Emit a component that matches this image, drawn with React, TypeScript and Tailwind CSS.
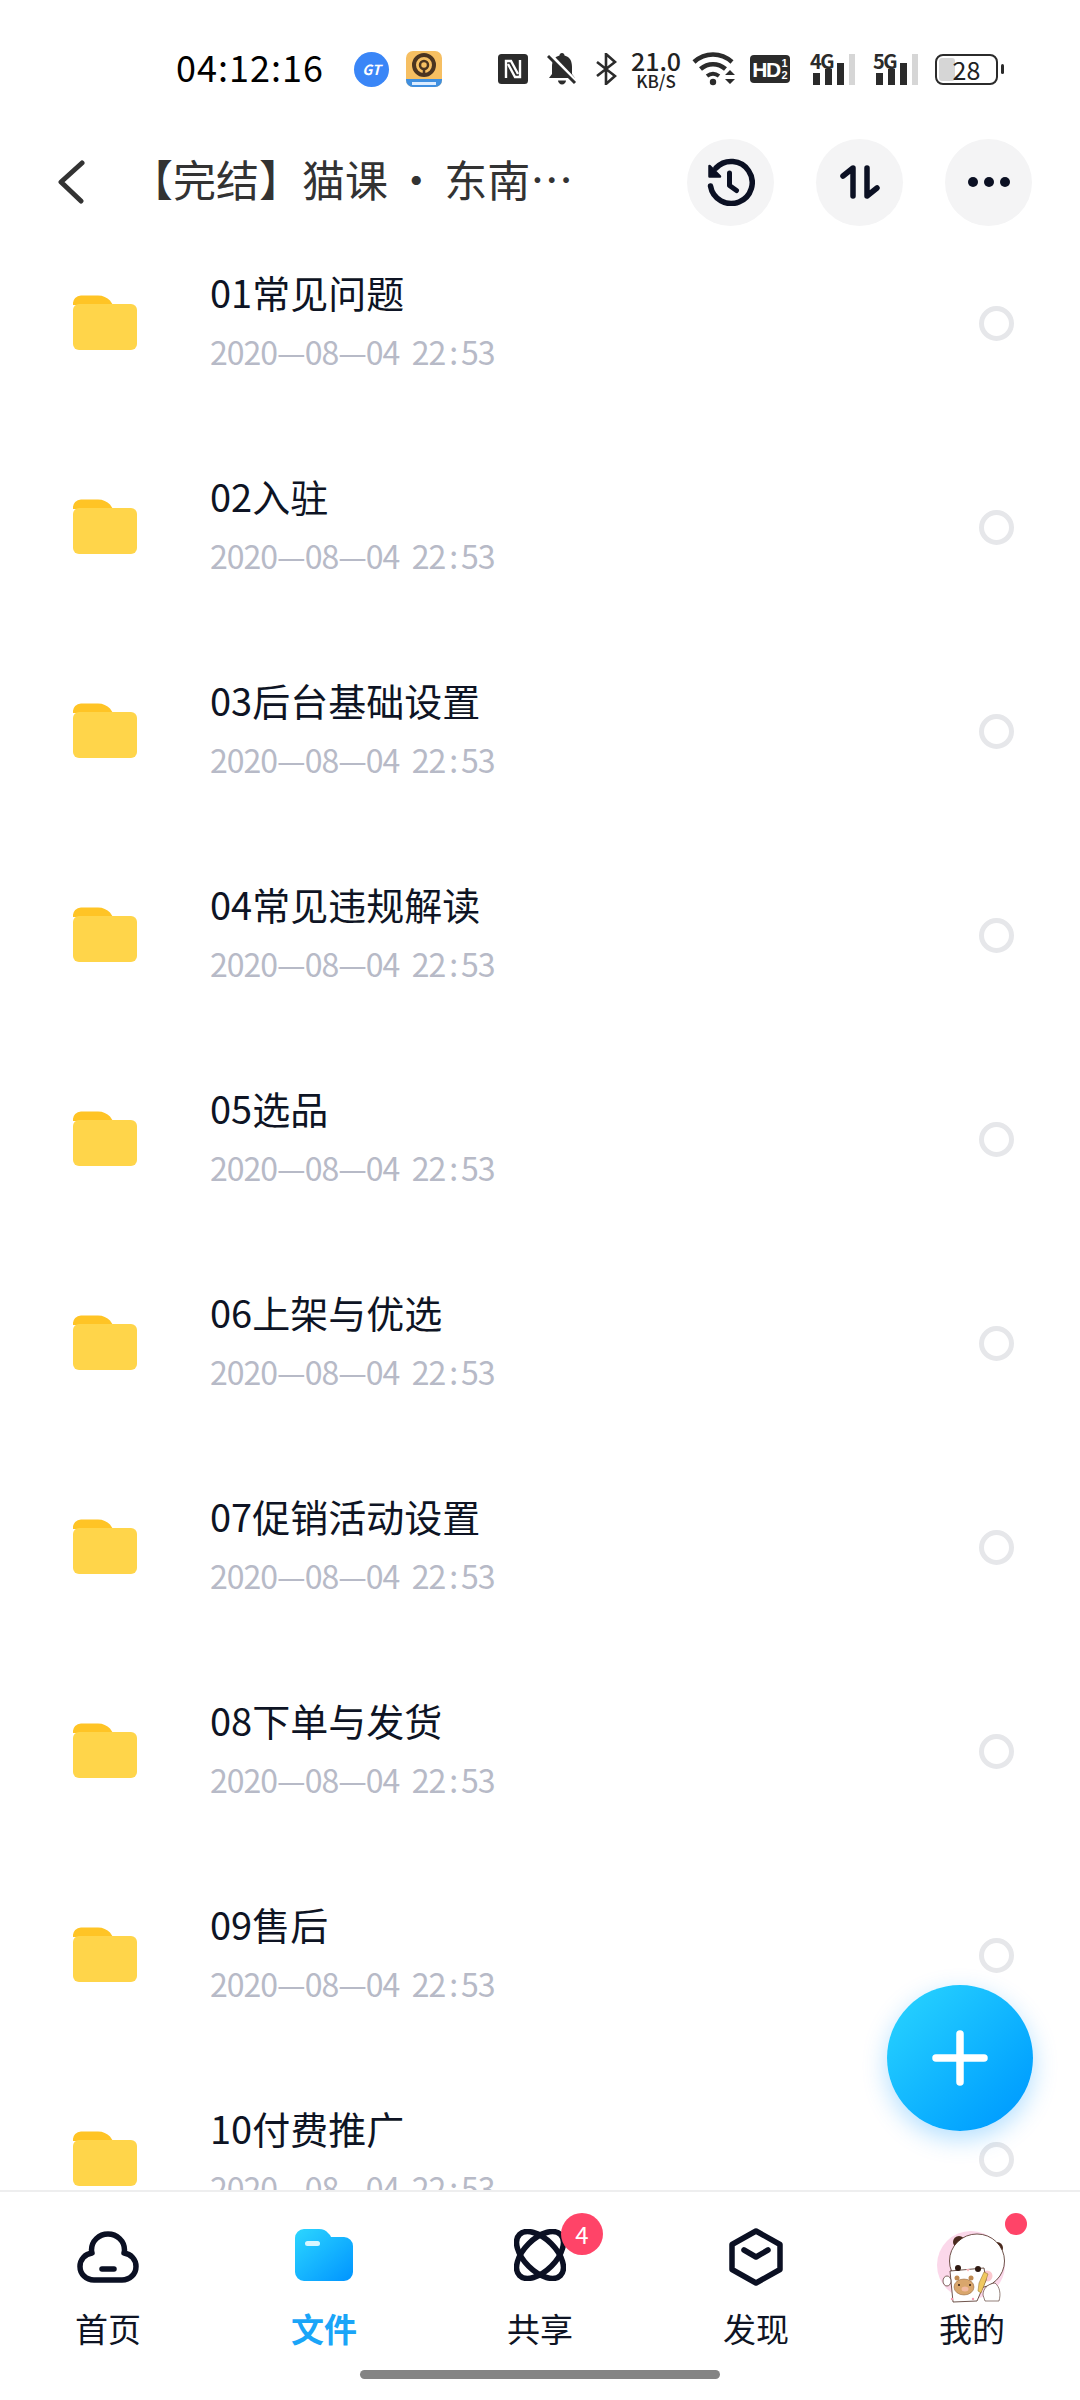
const folders = [
  "01常见问题",
  "02入驻",
  "03后台基础设置",
  "04常见违规解读",
  "05选品",
  "06上架与优选",
  "07促销活动设置",
  "08下单与发货",
  "09售后",
  "10付费推广",
];

function FolderIcon() {
  return (
    <svg width="64" height="55" viewBox="0 0 64 55" className="shrink-0">
      <path d="M0 9a8 8 0 0 1 8-8.500h17c5 0 9 2 12 5l3 4.500H0z" fill="#ffc425" />
      <path d="M0 15a6 6 0 0 1 6-6h52a6 6 0 0 1 6 6v34a6 6 0 0 1-6 6H6a6 6 0 0 1-6-6z" fill="#ffd54a" />
    </svg>
  );
}

function FolderRow({ name }: { name: string }) {
  return (
    <div className="flex h-[204px] shrink-0 items-center pl-[73px] pr-[66px]">
      <FolderIcon />
      <div className="mb-[5px] ml-[73px] flex flex-col">
        <span className="h-[52px] text-[38px] leading-[52px] text-[#0e1424]">{name}</span>
        <span className="mt-[11px] h-[44px] whitespace-pre text-[32px] leading-[44px] tracking-[-1px] text-[#b7bac7]">
          2020—08—04  22<span className="mx-[4px]">:</span>53
        </span>
      </div>
      <span className="ml-auto mt-[2px] h-[35px] w-[35px] rounded-full border-[5px] border-[#e6e7ea]" />
    </div>
  );
}

function StatusBar() {
  return (
    <div className="flex h-[138px] shrink-0 items-center pl-[176px]">
      <span className="mb-[6px] w-[148px] text-[36px] leading-none tracking-[1px] text-black">04:12:16</span>
      {/* notification icons */}
      <span className="ml-[30px] flex h-[35px] w-[35px] items-center justify-center rounded-full bg-[#3a86f7] text-[14px] font-bold italic text-white">
        GT
      </span>
      <svg width="36" height="36" viewBox="0 0 36 36" className="ml-[17px]">
        <rect width="36" height="36" rx="7" fill="#f6bf62" />
        <path d="M0 28h36v1a7 7 0 0 1-7 7H7a7 7 0 0 1-7-7z" fill="#3f8fe0" />
        <rect x="6" y="31" width="24" height="3" fill="#dcecff" />
        <circle cx="18" cy="14" r="10" fill="none" stroke="#4b3420" strokeWidth="4" />
        <circle cx="18" cy="14" r="4" fill="none" stroke="#4b3420" strokeWidth="2.500" />
        <path d="M18 18v6" stroke="#4b3420" strokeWidth="2.500" />
      </svg>
      {/* system indicators */}
      <svg width="30" height="30" viewBox="0 0 30 30" className="ml-[56px]">
        <rect width="30" height="30" rx="3.500" fill="#2b2b2b" />
        <path d="M8 24V7h5l7 13" fill="none" stroke="#fff" strokeWidth="2.400" />
        <path d="M22 6v17h-5L10 10" fill="none" stroke="#fff" strokeWidth="2.400" />
      </svg>
      <svg width="30" height="32" viewBox="0 0 30 32" className="ml-[19px]">
        <path d="M15 0c1.500 0 2.500 1 2.500 2.500C23 4 25 8 25 14v7l3 4H2l3-4v-7c0-6 2-10 7.500-11.500C12.500 1 13.500 0 15 0z" fill="#2b2b2b" />
        <path d="M11 27.500h8c0 2-2 4-4 4s-4-2-4-4z" fill="#2b2b2b" />
        <path d="M4 3l24 25" stroke="#fff" strokeWidth="4.500" />
        <path d="M1 3l27 27" stroke="#2b2b2b" strokeWidth="3" />
      </svg>
      <svg width="21" height="32" viewBox="0 0 21 32" className="ml-[19px]">
        <path d="M1 9l18 14-9 8V1l9 8L1 23" fill="none" stroke="#2b2b2b" strokeWidth="2.600" />
      </svg>
      <div className="ml-[15px] flex w-[48px] flex-col items-center">
        <span className="h-[21px] text-[25px] font-medium leading-[21px] text-[#222]">21.0</span>
        <span className="mt-[2px] h-[15px] text-[17px] font-medium leading-[15px] text-[#222]">KB/S</span>
      </div>
      <svg width="46" height="34" viewBox="0 0 46 34" className="ml-[12px]">
        <path d="M2 10c11-10 27-10 38 0" fill="none" stroke="#2b2b2b" strokeWidth="4.500" />
        <path d="M8.500 17c7.500-6.500 17.500-6.500 25 0" fill="none" stroke="#2b2b2b" strokeWidth="4.500" />
        <path d="M15 24c4-3 8-3 12 0" fill="none" stroke="#2b2b2b" strokeWidth="4" />
        <circle cx="21" cy="30" r="3.200" fill="#2b2b2b" />
        <path d="M33 23l5-5 5 5zM33 27l5 5 5-5z" fill="#2b2b2b" />
      </svg>
      <div className="ml-[12px] flex h-[28px] w-[40px] items-center justify-center rounded-[4px] bg-[#2b2b2b] font-['Liberation_Sans',sans-serif] font-bold text-white">
        <span className="text-[21px] leading-none tracking-[-1.500px]">HD</span>
        <span className="ml-[2px] flex flex-col text-[11px] leading-[12px]">
          <span>1</span>
          <span>2</span>
        </span>
      </div>
      <Signal label="4G" className="ml-[20px]" />
      <Signal label="5G" className="ml-[17px]" />
      <div className="relative ml-[16px] flex h-[31px] w-[63px] items-center justify-center rounded-[8px] border-[2.500px] border-[#2b2b2b]">
        <span className="absolute bottom-[2px] left-[2px] top-[2px] w-[16px] rounded-[3px] bg-[#d6d6d6]" />
        <span className="relative text-[25px] leading-none text-[#222]">28</span>
      </div>
      <span className="ml-[3px] h-[10px] w-[3px] rounded-full bg-[#2b2b2b]" />
    </div>
  );
}

function Signal({ label, className }: { label: string; className: string }) {
  return (
    <div className={`relative h-[32px] w-[46px] ${className}`}>
      <span className="absolute left-0 top-[-2px] text-[20px] font-bold leading-[20px] tracking-[-1.500px] text-[#2b2b2b]">{label}</span>
      <span className="absolute bottom-0 left-[3px] h-[12px] w-[7px] bg-[#2b2b2b]" />
      <span className="absolute bottom-0 left-[15px] h-[16px] w-[7px] bg-[#2b2b2b]" />
      <span className="absolute bottom-0 left-[27px] h-[22px] w-[7px] bg-[#2b2b2b]" />
      <span className="absolute bottom-0 left-[39px] h-[31px] w-[6px] bg-[#d6d6d6]" />
    </div>
  );
}

function Header() {
  return (
    <div className="flex h-[88px] shrink-0 items-center pr-[48px]">
      <svg width="28" height="44" viewBox="0 0 28 44" className="ml-[57px] shrink-0">
        <path d="M25 3L4 22l20 19" fill="none" stroke="#333" strokeWidth="5" strokeLinecap="round" strokeLinejoin="round" />
      </svg>
      <span className="mb-[7px] ml-[45px] whitespace-nowrap text-[43px] leading-none text-[#333] [text-spacing-trim:space-all] [word-spacing:-3px]">
        【完结】猫课 · 东南…
      </span>
      <div className="ml-auto flex gap-[42px]">
        <button type="button" className="flex h-[87px] w-[87px] items-center justify-center rounded-full bg-[#f4f4f5]">
          <svg width="48" height="48" viewBox="0 0 48 48">
            <path d="M3.500 28A21 21 0 1 0 9 10" fill="none" stroke="#0b1023" strokeWidth="5.500" strokeLinecap="round" />
            <path d="M2.500 8v10.500H13z" fill="#0b1023" stroke="#0b1023" strokeWidth="2.500" strokeLinejoin="round" />
            <path d="M22.500 15v12.500l7 5" fill="none" stroke="#0b1023" strokeWidth="5" strokeLinecap="round" strokeLinejoin="round" />
          </svg>
        </button>
        <button type="button" className="flex h-[87px] w-[87px] items-center justify-center rounded-full bg-[#f4f4f5]">
          <svg width="40" height="34" viewBox="0 0 40 34">
            <path d="M13 31V3L3 11" fill="none" stroke="#0b1023" strokeWidth="5.500" strokeLinecap="round" strokeLinejoin="round" />
            <path d="M27 3v28l10-8" fill="none" stroke="#0b1023" strokeWidth="5.500" strokeLinecap="round" strokeLinejoin="round" />
          </svg>
        </button>
        <button type="button" className="flex h-[87px] w-[87px] items-center justify-center gap-[6px] rounded-full bg-[#f4f4f5]">
          <span className="h-[10px] w-[10px] rounded-full bg-[#0b1023]" />
          <span className="h-[10px] w-[10px] rounded-full bg-[#0b1023]" />
          <span className="h-[10px] w-[10px] rounded-full bg-[#0b1023]" />
        </button>
      </div>
    </div>
  );
}

function Avatar() {
  return (
    <svg width="70" height="72" viewBox="0 0 70 72" className="mt-[39px]">
      <circle cx="34" cy="34" r="34" fill="#fbd8ea" />
      <circle cx="22" cy="11" r="6" fill="#4a2a1e" />
      <circle cx="60" cy="17" r="6" fill="#4a2a1e" />
      <ellipse cx="40" cy="30" rx="27.500" ry="27" fill="#fff" stroke="#4a2a1e" strokeWidth="0.800" />
      <circle cx="50" cy="45" r="5.500" fill="#fbc9cf" />
      <path d="M58 52c-8 1-12 6-12 12l2 6h14c2-7 1-14-4-18z" fill="#fff" stroke="#4a2a1e" strokeWidth="0.600" />
      <path d="M13 40l34-3 2 12-9 21-24 1z" fill="#fff" stroke="#4a2a1e" strokeWidth="0.800" />
      <path d="M42 52l5-11 4 2-3 9-4 10-3-2z" fill="#f0c860" stroke="#8a6a2a" strokeWidth="0.500" />
      <circle cx="21" cy="37" r="3" fill="#2e1a12" />
      <circle cx="41" cy="38" r="3" fill="#2e1a12" />
      <path d="M29 38l2 2.500 2-2.500" fill="#f7b0b6" />
      <ellipse cx="10" cy="50" rx="4" ry="5" fill="#fff" stroke="#4a2a1e" strokeWidth="0.700" />
      <circle cx="20" cy="47" r="2.500" fill="#c08a50" />
      <circle cx="34" cy="47" r="2.500" fill="#c08a50" />
      <ellipse cx="27" cy="56" rx="10" ry="8" fill="#d9a66c" stroke="#8a5a30" strokeWidth="0.500" />
      <ellipse cx="28" cy="58" rx="3.500" ry="2.500" fill="#f2b9a0" />
      <circle cx="22" cy="54" r="1" fill="#2e1a12" />
      <circle cx="33" cy="54" r="1" fill="#2e1a12" />
      <circle cx="15" cy="68" r="1.200" fill="#f49ab0" />
      <circle cx="36" cy="68" r="1.200" fill="#f49ab0" />
    </svg>
  );
}

function BottomNav() {
  return (
    <div className="h-[210px] shrink-0 border-t-2 border-[#eeeeef] bg-white">
      <div className="grid h-[160px] grid-cols-5">
        <div className="flex flex-col items-center">
          <div className="flex h-[114px] justify-center">
            <svg width="62" height="52" viewBox="0 0 62 52" className="mt-[39px]">
              <path d="M17 49h28c8 0 14-6 14-13.500 0-7-5-12.500-12-13.500 .5-2 .5-2.500 .5-3C47.500 10 40 3 31 3S14.500 10 14.500 19c0 .5 0 1 .5 3-7 1-12 6.500-12 13.500C3 43 9 49 17 49z" fill="none" stroke="#0b1023" strokeWidth="5.500" strokeLinejoin="round" />
              <path d="M25 38h12" stroke="#0b1023" strokeWidth="5.500" strokeLinecap="round" />
            </svg>
          </div>
          <span className="text-[33px] leading-[44px] text-[#0e1424]">首页</span>
        </div>
        <div className="flex flex-col items-center">
          <div className="flex h-[114px] justify-center">
            <svg width="58" height="53" viewBox="0 0 58 53" className="mt-[37px]">
              <defs>
                <linearGradient id="tabFolder" x1="0" y1="0" x2="1" y2="1">
                  <stop offset="0" stopColor="#2cd6ff" />
                  <stop offset="1" stopColor="#0094ff" />
                </linearGradient>
              </defs>
              <path d="M0 9a9 9 0 0 1 9-9h15c4 0 7 1.500 9 4l2 2 1 2h13a9 9 0 0 1 9 9v26a9 9 0 0 1-9 9H9a9 9 0 0 1-9-9z" fill="url(#tabFolder)" />
              <rect x="10" y="12" width="15" height="5" rx="2.500" fill="#d8f6ff" />
            </svg>
          </div>
          <span className="text-[33px] font-bold leading-[44px] text-[#1aa5f8]">文件</span>
        </div>
        <div className="relative flex flex-col items-center">
          <div className="flex h-[114px] justify-center">
            <svg width="52" height="52" viewBox="0 0 52 52" className="mt-[37px]">
              <ellipse cx="26" cy="26" rx="29" ry="16" transform="rotate(45 26 26)" fill="none" stroke="#0b1023" strokeWidth="5.500" />
              <ellipse cx="26" cy="26" rx="29" ry="16" transform="rotate(-45 26 26)" fill="none" stroke="#0b1023" strokeWidth="5.500" />
            </svg>
          </div>
          <span className="text-[33px] leading-[44px] text-[#0e1424]">共享</span>
          <span className="absolute left-[129px] top-[21px] flex h-[42px] w-[42px] items-center justify-center rounded-full bg-[#ff4468] text-[24px] leading-none text-white">4</span>
        </div>
        <div className="flex flex-col items-center">
          <div className="flex h-[114px] justify-center">
            <svg width="54" height="58" viewBox="0 0 54 58" className="mt-[36px]">
              <path d="M27 3l24 13.500v25L27 55 3 41.500v-25z" fill="none" stroke="#0b1023" strokeWidth="5.500" strokeLinejoin="round" />
              <path d="M15 22l12 7 12-7" fill="none" stroke="#0b1023" strokeWidth="5.500" strokeLinecap="round" strokeLinejoin="round" />
            </svg>
          </div>
          <span className="text-[33px] leading-[44px] text-[#0e1424]">发现</span>
        </div>
        <div className="relative flex flex-col items-center">
          <div className="flex h-[114px] justify-center">
            <Avatar />
          </div>
          <span className="text-[33px] leading-[44px] text-[#0e1424]">我的</span>
          <span className="absolute left-[141px] top-[21px] h-[22px] w-[22px] rounded-full bg-[#ff4468]" />
        </div>
      </div>
      <div className="mx-auto mt-[18px] h-[9px] w-[360px] rounded-full bg-[#848484]" />
    </div>
  );
}

export default function App() {
  return (
    <div className="relative flex h-[2400px] w-[1080px] flex-col overflow-hidden bg-white font-['Noto_Sans_CJK_SC','Noto_Sans',sans-serif]">
      <StatusBar />
      <Header />
      <div className="min-h-0 flex-1 overflow-hidden">
        <div className="-mt-[6px] flex flex-col">
          {folders.map((name) => (
            <FolderRow key={name} name={name} />
          ))}
        </div>
      </div>
      <BottomNav />
      <button
        type="button"
        className="absolute left-[887px] top-[1985px] flex h-[146px] w-[146px] items-center justify-center rounded-full bg-gradient-to-br from-[#2ad6ff] to-[#0095ff] shadow-[0_8px_24px_rgba(0,150,255,0.3)]"
      >
        <svg width="56" height="56" viewBox="0 0 56 56">
          <path d="M28 4v48M4 28h48" stroke="#fff" strokeWidth="7.500" strokeLinecap="round" />
        </svg>
      </button>
    </div>
  );
}
